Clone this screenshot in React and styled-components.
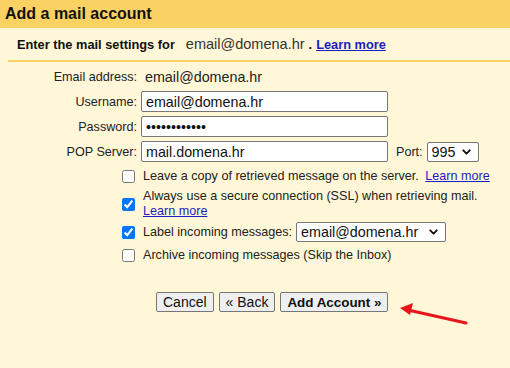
import React from 'react';
import styled, { createGlobalStyle } from 'styled-components';
import { ChevronDown } from 'lucide-react';

const GlobalStyle = createGlobalStyle`
  html, body {
    margin: 0;
    background: #fff7d7;
  }
  body {
    font-family: "Liberation Sans", Arial, sans-serif;
    color: #222;
  }
`;

const Page = styled.div`
  position: relative;
  width: 510px;
  height: 368px;
  overflow: hidden;
`;

const TitleBar = styled.div`
  height: 28px;
  background: #fad163;
  display: flex;
  align-items: center;
  padding-left: 5px;
  font-size: 16px;
  font-weight: bold;
  color: #111;
`;

const Intro = styled.div`
  height: 32px;
  display: flex;
  align-items: center;
  padding-left: 17px;
  font-size: 12.8px;
  font-weight: bold;
  color: #111;
`;

const IntroEmail = styled.span`
  margin-left: 11px;
  font-size: 14.5px;
  font-weight: normal;
  color: #333;
`;

const IntroDot = styled.span`
  margin-left: 4px;
`;

const Link = styled.a`
  color: #1c1cc4;
  text-decoration: underline;
  cursor: pointer;
  margin-left: ${(p) => p.$gap || 0}px;
`;

const Divider = styled.div`
  height: 2px;
  margin-left: 8px;
  background: #fad163;
`;

const Fields = styled.div`
  display: grid;
  grid-template-columns: 137px 247px auto;
  grid-auto-rows: 21px;
  column-gap: 4px;
  row-gap: 4px;
  margin-top: 4px;
  align-items: center;
`;

const Label = styled.label`
  text-align: right;
  font-size: 12.6px;
  color: #222;
  white-space: nowrap;
`;

const Value = styled.span`
  padding-left: 4px;
  font-size: 14.3px;
  color: #222;
  white-space: nowrap;
`;

const TextInput = styled.input`
  box-sizing: border-box;
  width: 247px;
  height: 21px;
  margin: 0;
  padding: 0 4px;
  border: 1px solid #767676;
  border-radius: 2px;
  background: #fff;
  font-family: inherit;
  font-size: 14.3px;
  color: #111;
  outline: none;
`;

const PortCell = styled.div`
  display: flex;
  align-items: center;
  gap: 4px;
  padding-left: 4px;
`;

const SelectWrap = styled.span`
  position: relative;
  display: inline-flex;
  margin-left: ${(p) => p.$gap || 0}px;
`;

const Select = styled.select`
  appearance: none;
  box-sizing: border-box;
  width: ${(p) => p.$width}px;
  height: 20px;
  margin: 0;
  padding: 0 20px 0 4px;
  border: 1px solid #767676;
  border-radius: 2px;
  background: #fff;
  font-family: inherit;
  font-size: 14.3px;
  color: #111;
  outline: none;
`;

const Chevron = styled(ChevronDown)`
  position: absolute;
  right: 6px;
  top: 50%;
  transform: translateY(-50%);
  pointer-events: none;
  color: #111;
`;

const Checks = styled.div`
  display: flex;
  flex-direction: column;
  gap: 3px;
  margin: 4px 0 0 122px;
`;

const CheckRow = styled.label`
  display: flex;
  align-items: center;
  gap: 8px;
  min-height: 20px;
  font-size: 12.6px;
  line-height: 15px;
  color: #222;
`;

const Box = styled.input`
  flex: none;
  width: 13px;
  height: 13px;
  margin: 0;
`;

const Buttons = styled.div`
  display: flex;
  gap: 5px;
  margin: 27px 0 0 156px;
`;

const Button = styled.button`
  box-sizing: border-box;
  height: 20px;
  padding: 0 6px;
  border: 1px solid #767676;
  border-radius: 2px;
  background: #efefef;
  font-family: inherit;
  font-size: ${(p) => (p.$primary ? '13.4px' : '14px')};
  font-weight: ${(p) => (p.$primary ? 'bold' : 'normal')};
  color: #111;
  cursor: pointer;
`;

const Arrow = styled.svg`
  position: absolute;
  left: 396px;
  top: 300px;
`;

const DropDown = ({ width, gap, children }) => (
  <SelectWrap $gap={gap}>
    <Select $width={width} defaultValue={children}>
      <option>{children}</option>
    </Select>
    <Chevron size={13} strokeWidth={3.5} />
  </SelectWrap>
);

export default function App() {
  return (
    <>
      <GlobalStyle />
      <Page>
        <TitleBar>Add a mail account</TitleBar>
        <Intro>
          Enter the mail settings for
          <IntroEmail>email@domena.hr</IntroEmail>
          <IntroDot>.</IntroDot>
          <Link $gap={4}>Learn more</Link>
        </Intro>
        <Divider />

        <Fields>
          <Label>Email address:</Label>
          <Value>email@domena.hr</Value>
          <span />

          <Label>Username:</Label>
          <TextInput defaultValue="email@domena.hr" />
          <span />

          <Label>Password:</Label>
          <TextInput type="password" defaultValue="passwordxyz1" />
          <span />

          <Label>POP Server:</Label>
          <TextInput defaultValue="mail.domena.hr" />
          <PortCell>
            <Label>Port:</Label>
            <DropDown width={52}>995</DropDown>
          </PortCell>
        </Fields>

        <Checks>
          <CheckRow>
            <Box type="checkbox" />
            <span>
              Leave a copy of retrieved message on the server. <Link $gap={3}>Learn more</Link>
            </span>
          </CheckRow>
          <CheckRow>
            <Box type="checkbox" defaultChecked />
            <span>
              Always use a secure connection (SSL) when retrieving mail.
              <br />
              <Link>Learn more</Link>
            </span>
          </CheckRow>
          <CheckRow>
            <Box type="checkbox" defaultChecked />
            <span>Label incoming messages:</span>
            <DropDown width={150} gap={-4}>email@domena.hr</DropDown>
          </CheckRow>
          <CheckRow>
            <Box type="checkbox" />
            <span>Archive incoming messages (Skip the Inbox)</span>
          </CheckRow>
        </Checks>

        <Buttons>
          <Button>Cancel</Button>
          <Button>« Back</Button>
          <Button $primary>Add Account »</Button>
        </Buttons>

        <Arrow width="80" height="30" viewBox="0 0 80 30">
          <line x1="70" y1="23" x2="12" y2="10" stroke="#e8161b" strokeWidth="3" strokeLinecap="round" />
          <polygon points="4,8 17,3 14,15" fill="#e8161b" />
        </Arrow>
      </Page>
    </>
  );
}
